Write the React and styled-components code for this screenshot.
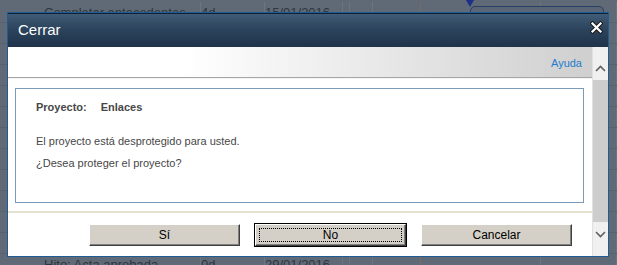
import styled, { createGlobalStyle } from "styled-components";

const GlobalStyle = createGlobalStyle`
  html, body {
    margin: 0;
    padding: 0;
    overflow: hidden;
    background: #5f6a76;
  }
`;

const rows = [
  { name: "Completar antecedentes", dur: "4d", date: "15/01/2016" },
  {}, {}, {}, {}, {}, {}, {}, {}, {}, {}, {},
  { name: "Hito: Acta aprobada", dur: "0d", date: "29/01/2016" },
];

export default function App() {
  return (
    <Page>
      <GlobalStyle />
      <Sheet>
        {rows.map((r, i) => (
          <SheetRow key={i}>
            <Cell />
            <Cell>{r.name}</Cell>
            <Cell>{r.dur}</Cell>
            <Cell>{r.date}</Cell>
            <Cell />
            <Cell />
            <Cell $accent />
            <Cell />
            <Cell />
          </SheetRow>
        ))}
      </Sheet>
      <Milestone />
      <GanttBar />

      <Dialog>
        <TitleBar>
          <Title>Cerrar</Title>
          <CloseIcon width="13" height="13" viewBox="0 0 13 13">
            <path d="M2.5 2.5 L10.5 10.5 M10.5 2.5 L2.5 10.5" stroke="#1a1a1a" strokeWidth="4.2" strokeLinecap="square" />
            <path d="M2.5 2.5 L10.5 10.5 M10.5 2.5 L2.5 10.5" stroke="#ffffff" strokeWidth="2.2" strokeLinecap="square" />
          </CloseIcon>
        </TitleBar>

        <Body>
          <Main>
            <Toolbar>
              <HelpLink>Ayuda</HelpLink>
            </Toolbar>
            <ContentArea>
              <MessageBox>
                <ProjectLine>
                  <span>Proyecto:</span>
                  <span>Enlaces</span>
                </ProjectLine>
                <Message>El proyecto está desprotegido para usted.</Message>
                <Message>¿Desea proteger el proyecto?</Message>
              </MessageBox>
            </ContentArea>
            <Footer>
              <Button>Sí</Button>
              <Button $focused>
                <FocusRing>No</FocusRing>
              </Button>
              <Button>Cancelar</Button>
            </Footer>
          </Main>
          <ScrollBar>
            <ScrollButton>
              <svg width="11" height="7" viewBox="0 0 11 7">
                <path d="M1 6 L5.5 1.5 L10 6" fill="none" stroke="#606060" strokeWidth="1.6" />
              </svg>
            </ScrollButton>
            <ScrollThumb />
            <ScrollButton $down>
              <svg width="11" height="7" viewBox="0 0 11 7">
                <path d="M1 1 L5.5 5.5 L10 1" fill="none" stroke="#606060" strokeWidth="1.6" />
              </svg>
            </ScrollButton>
          </ScrollBar>
        </Body>
      </Dialog>
    </Page>
  );
}

const Page = styled.div`
  position: relative;
  width: 617px;
  height: 265px;
  overflow: hidden;
  background: #5f6a76;
  font-family: "Liberation Sans", Arial, sans-serif;
`;

const Sheet = styled.div`
  display: flex;
  flex-direction: column;
  margin-top: 2px;
`;

const SheetRow = styled.div`
  display: grid;
  grid-template-columns: 44px 157px 64px 78px 7px 23px 48px 120px 76px;
  height: 21px;
  box-sizing: border-box;
  flex-shrink: 0;
  border-bottom: 1px solid #56616c;
`;

const Cell = styled.div`
  font-size: 13px;
  line-height: 21px;
  color: #2e3640;
  white-space: nowrap;
  overflow: hidden;
  border-right: 1px solid ${(p) => (p.$accent ? "#7a6a60" : "#6a7580")};
  &:first-child {
    border-right: none;
  }
`;

const Milestone = styled.div`
  position: absolute;
  left: 466px;
  top: 0;
  width: 0;
  height: 0;
  border-left: 4px solid transparent;
  border-right: 4px solid transparent;
  border-top: 7px solid #1c2f8a;
`;

const GanttBar = styled.div`
  position: absolute;
  left: 470px;
  top: 6px;
  width: 132px;
  height: 20px;
  border: 1px solid #2a3f66;
  border-radius: 5px;
  background: #5a6675;
`;

const Dialog = styled.div`
  position: absolute;
  left: 7px;
  top: 12px;
  width: 600px;
  height: 243px;
  border: 1px solid #1f5c96;
  display: flex;
  flex-direction: column;
  background: #ffffff;
`;

const TitleBar = styled.div`
  height: 33px;
  flex-shrink: 0;
  display: flex;
  align-items: center;
  justify-content: space-between;
  padding: 0 5px 0 10px;
  background: linear-gradient(to bottom, #415c77 0%, #2c445d 45%, #1f334a 100%);
  border-top: 1px solid #0d2236;
`;

const Title = styled.div`
  color: #ffffff;
  font-size: 15px;
  font-family: "Liberation Sans", Arial, sans-serif;
  margin-top: -2px;
`;

const CloseIcon = styled.svg`
  display: block;
  margin-top: -7px;
`;

const Body = styled.div`
  flex: 1;
  display: flex;
  min-height: 0;
`;

const Main = styled.div`
  flex: 1;
  display: flex;
  flex-direction: column;
`;

const Toolbar = styled.div`
  height: 30px;
  display: flex;
  align-items: center;
  justify-content: flex-end;
  padding-right: 10px;
  background: linear-gradient(to right, #ffffff 0%, #ffffff 30%, #cfcfcf 100%);
  border-bottom: 1px solid #a6a6a6;
  box-shadow: 0 1px 0 #f4f4f4;
`;

const HelpLink = styled.a`
  color: #1f7ccb;
  font-size: 11px;
  cursor: pointer;
  margin-top: 2px;
`;

const ContentArea = styled.div`
  padding: 10px 8px 8px 7px;
  border-bottom: 2px solid #e4e2d0;
`;

const MessageBox = styled.div`
  height: 115px;
  box-sizing: border-box;
  border: 1px solid #7b9ab7;
  padding: 11px 20px 0;
  color: #474747;
  font-size: 11px;
`;

const ProjectLine = styled.div`
  display: flex;
  gap: 14px;
  font-weight: bold;
  line-height: 14px;
  margin-bottom: 20px;
`;

const Message = styled.div`
  line-height: 14px;
  margin-bottom: 8px;
`;

const Footer = styled.div`
  display: flex;
  justify-content: flex-end;
  gap: 15px;
  padding: 11px 20px 0 0;
`;

const Button = styled.button`
  width: 151px;
  height: 22px;
  box-sizing: border-box;
  padding: 0;
  display: flex;
  align-items: center;
  justify-content: center;
  font-family: "Liberation Sans", Arial, sans-serif;
  font-size: 12px;
  color: #000000;
  background: #d4d0c8;
  border: 1px solid;
  border-color: #ffffff #404040 #404040 #ffffff;
  box-shadow: inset -1px -1px 0 #808080;
  outline: ${(p) => (p.$focused ? "1px solid #000" : "none")};
  outline-offset: 0;
`;

const FocusRing = styled.span`
  display: flex;
  align-items: center;
  justify-content: center;
  width: calc(100% - 6px);
  height: calc(100% - 6px);
  border: 1px dotted #000;
  box-sizing: border-box;
`;

const ScrollBar = styled.div`
  width: 15px;
  display: flex;
  flex-direction: column;
  background: #f0f0f0;
  border-left: 1px solid #e0e0e0;
`;

const ScrollButton = styled.div`
  height: ${(p) => (p.$down ? "34px" : "33px")};
  display: flex;
  align-items: ${(p) => (p.$down ? "flex-start" : "flex-end")};
  justify-content: center;
  padding: ${(p) => (p.$down ? "9px 0 0" : "0 0 8px")};
  box-sizing: border-box;
`;

const ScrollThumb = styled.div`
  flex: 1;
  background: #cdcdcd;
`;
